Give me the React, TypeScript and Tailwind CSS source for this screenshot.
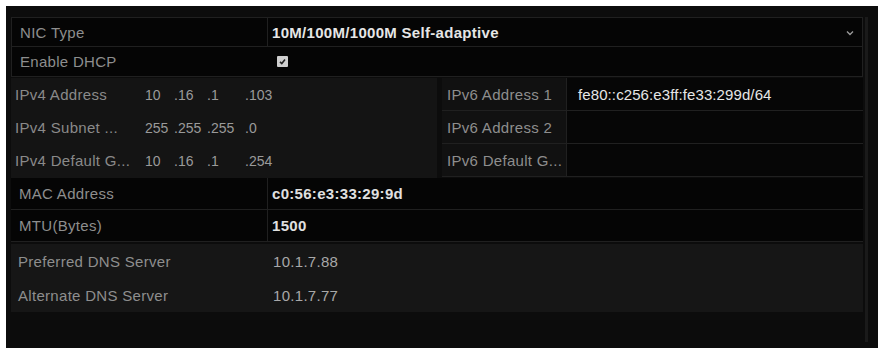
import React from "react";

const F = { fontFamily: '"Liberation Sans", Arial, sans-serif' };

function Octets({ parts }: { parts: string[] }) {
  const widths = ["w-[29px]", "w-[33px]", "w-[38px]", "w-[40px]"];
  return (
    <div className="flex items-center text-[#9a9a9a] text-[14px] tracking-normal">
      {parts.map((p, i) => (
        <span key={i} className={widths[i]}>
          {p}
        </span>
      ))}
    </div>
  );
}

export default function App() {
  return (
    <div className="w-[878px] h-[351px] bg-white pt-[6px] pl-[6px] overflow-hidden" style={F}>
      <div className="w-[872px] h-[342px] bg-[#0c0c0c] flex text-[15px] leading-none tracking-[0.3px]">
        <div className="w-[857px] pl-[5px] pt-[11px] flex flex-col">
          {/* NIC Type */}
          <div className="h-[30px] flex border border-[#202020] bg-[#050505]">
            <div className="w-[256px] border-r border-[#202020] flex items-center pl-[8px] text-[#8e8e8e]">NIC Type</div>
            <div className="flex-1 flex items-center justify-between pl-[4px] pr-[8px] text-[#e6e6e6] font-bold">
              <span>10M/100M/1000M Self-adaptive</span>
              <svg width="8" height="6" viewBox="0 0 8 6" className="mt-[2px]">
                <path d="M1 1.5 L4 4.5 L7 1.5" stroke="#9a9a9a" strokeWidth="1.4" fill="none" />
              </svg>
            </div>
          </div>
          {/* Enable DHCP */}
          <div className="h-[30px] flex border-x border-b border-[#202020] bg-[#050505]">
            <div className="w-[256px] flex items-center pl-[8px] text-[#8e8e8e]">Enable DHCP</div>
            <div className="flex-1 flex items-center pl-[9px]">
              <div className="w-[11px] h-[11px] bg-[#cfcfcf] rounded-[1px] flex items-center justify-center">
                <svg width="9" height="9" viewBox="0 0 9 9">
                  <path d="M2 4.8 L3.8 6.5 L7 2.5" stroke="#222" strokeWidth="1.6" fill="none" />
                </svg>
              </div>
            </div>
          </div>
          {/* IPv4 / IPv6 block */}
          <div className="h-[100px] flex mt-[1px]">
            <div className="w-[426px] bg-[#141414] flex flex-col">
              {[
                ["IPv4 Address", ["10", ".16", ".1", ".103"]],
                ["IPv4 Subnet ...", ["255", ".255", ".255", ".0"]],
                ["IPv4 Default G...", ["10", ".16", ".1", ".254"]],
              ].map(([label, parts], i) => (
                <div key={i} className="h-[33px] flex items-center">
                  <div className="w-[134px] pl-[4px] text-[#8a8a8a] whitespace-nowrap overflow-hidden">{label as string}</div>
                  <Octets parts={parts as string[]} />
                </div>
              ))}
            </div>
            <div className="w-[5px]" />
            <div className="flex-1 flex flex-col">
              {["IPv6 Address 1", "IPv6 Address 2", "IPv6 Default G..."].map((label, i) => (
                <div key={i} className="h-[33px] flex border-b border-[#202020] bg-[#060606]">
                  <div className="w-[125px] bg-[#111111] border-r border-[#202020] flex items-center pl-[5px] text-[#8e8e8e] whitespace-nowrap overflow-hidden">
                    {label}
                  </div>
                  <div className="flex-1 flex items-center pl-[11px] text-[#e6e6e6] tracking-[0.1px]">
                    {i === 0 ? "fe80::c256:e3ff:fe33:299d/64" : ""}
                  </div>
                </div>
              ))}
            </div>
          </div>
          {/* MAC / MTU */}
          {[
            ["MAC Address", "c0:56:e3:33:29:9d"],
            ["MTU(Bytes)", "1500"],
          ].map(([l, v], i) => (
            <div key={i} className="h-[32px] flex border-b border-[#202020] bg-[#050505]">
              <div className="w-[257px] border-r border-[#202020] flex items-center pl-[8px] text-[#8e8e8e]">{l}</div>
              <div className="flex-1 flex items-center pl-[4px] text-[#e0e0e0] font-bold">{v}</div>
            </div>
          ))}
          {/* DNS */}
          <div className="mt-[2px] bg-[#161616] flex flex-col">
            {[
              ["Preferred DNS Server", "10.1.7.88"],
              ["Alternate DNS Server", "10.1.7.77"],
            ].map(([l, v], i) => (
              <div key={i} className="h-[34px] flex items-center">
                <div className="w-[262px] pl-[7px] text-[#8e8e8e]">{l}</div>
                <div className="text-[#a8a8a8]">{v}</div>
              </div>
            ))}
          </div>
        </div>
        <div className="flex-1 flex pt-[11px] pb-[6px]">
          <div className="w-[3px] ml-[2px] bg-[#1a1a1a]" />
        </div>
      </div>
    </div>
  );
}
